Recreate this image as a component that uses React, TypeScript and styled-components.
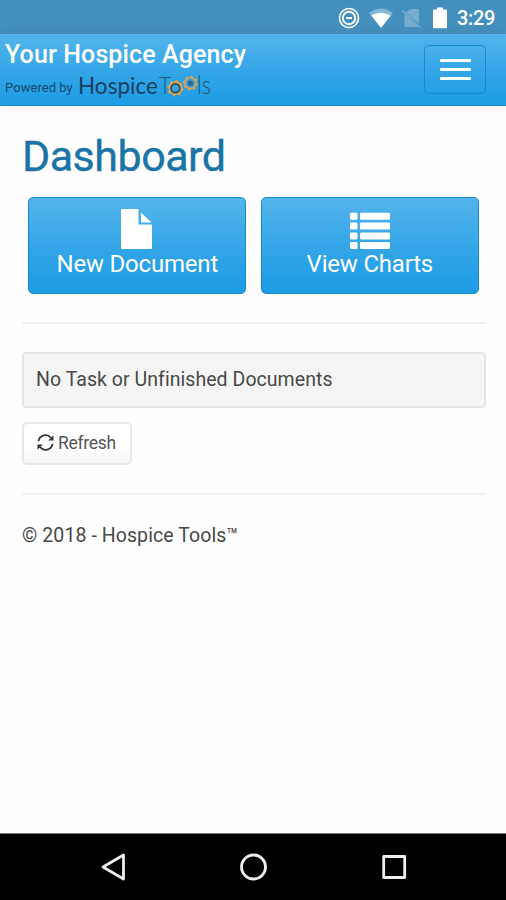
import React from "react";
import styled, { createGlobalStyle } from "styled-components";

const GlobalStyle = createGlobalStyle`
  *, *::before, *::after { box-sizing: border-box; }
  body { margin: 0; background: #fff; }
  button { font: inherit; margin: 0; }
`;

const Screen = styled.div`
  display: flex;
  flex-direction: column;
  width: 506px;
  height: 900px;
  overflow: hidden;
  background: #fefefe;
  color: #484848;
  font-family: Roboto, "Liberation Sans", sans-serif;
`;

const StatusBar = styled.div`
  display: flex;
  flex: none;
  align-items: center;
  justify-content: flex-end;
  height: 34px;
  padding: 1px 11px 0 0;
  background: #438fbd;
  color: #fff;
`;

const StatusIcons = styled.svg`
  display: block;
  margin-right: 9px;
`;

const Clock = styled.span`
  width: 38px;
  font-size: 20px;
  font-weight: 500;
  line-height: 24px;
  letter-spacing: -0.3px;
  white-space: nowrap;
`;

const Navbar = styled.header`
  display: flex;
  flex: none;
  justify-content: space-between;
  height: 72px;
  padding: 0 20px 0 5px;
  background: linear-gradient(#54b4eb, #2fa4e7 60%, #1d9ce5);
  border-bottom: 1px solid #178acc;
  box-shadow: 0 1px 10px rgba(0, 0, 0, 0.08);
`;

const Brand = styled.div`
  display: flex;
  flex-direction: column;
  padding-top: 7px;
`;

const AgencyName = styled.div`
  color: #fff;
  font-size: 25px;
  font-weight: 500;
  line-height: 28px;
  letter-spacing: 0.12px;
  white-space: nowrap;
`;

const Powered = styled.div`
  display: flex;
  gap: 5px;
  color: #16486b;
  font-size: 13px;
  line-height: 37px;
  letter-spacing: 0.05px;
  white-space: nowrap;
`;

const PoweredLabel = styled.span`
  width: 69px;
`;

const LogoDrawing = styled.svg`
  display: block;
  overflow: visible;
`;

const MenuButton = styled.button`
  display: flex;
  flex-direction: column;
  align-items: center;
  justify-content: center;
  gap: 6px;
  width: 62px;
  height: 49px;
  margin-top: 11px;
  padding: 0;
  background: transparent;
  border: 1px solid #178acc;
  border-radius: 5px;
`;

const MenuLine = styled.span`
  width: 31px;
  height: 3px;
  border-radius: 1px;
  background: #fff;
`;

const Content = styled.main`
  flex: 1;
  padding: 25px 20px 0 22px;
`;

const Title = styled.h1`
  margin: 0;
  color: #1a74a6;
  font-size: 43px;
  font-weight: 400;
  -webkit-text-stroke: 0.4px #1a74a6;
  line-height: 50px;
  letter-spacing: -0.5px;
  white-space: nowrap;
`;

const Actions = styled.div`
  display: grid;
  grid-template-columns: 218px 218px;
  gap: 14.5px;
  margin: 16px 0 0 6.3px;
`;

const ActionButton = styled.button`
  display: flex;
  flex-direction: column;
  align-items: center;
  height: 97px;
  padding: 11px 0 0;
  color: #fff;
  font-size: 24px;
  line-height: 30px;
  white-space: nowrap;
  background: linear-gradient(#54b4eb, #2fa4e7 60%, #1d9ce5);
  border: 1px solid #178acc;
  border-radius: 5px;
`;

const ActionLabel = styled.span`
  letter-spacing: -0.2px;
`;

const Divider = styled.hr`
  height: 2px;
  margin: 28px 0 0;
  border: 0;
  background: #f0f0f0;
`;

const TaskWell = styled.section`
  height: 56px;
  margin-top: 28px;
  padding: 12px 12px 0;
  font-size: 19.5px;
  line-height: 28px;
  letter-spacing: 0.05px;
  white-space: nowrap;
  background: #f5f5f5;
  border: 2px solid #e5e5e5;
  border-radius: 4px;
`;

const RefreshButton = styled.button`
  display: flex;
  align-items: center;
  gap: 4px;
  width: 110px;
  height: 43px;
  margin-top: 14px;
  padding: 0 0 2px 13px;
  color: #555;
  font-size: 17.5px;
  line-height: 24px;
  letter-spacing: -0.3px;
  white-space: nowrap;
  background: linear-gradient(#fff, #fff 60%, #f5f5f5);
  border: 2px solid #e8e8e8;
  border-radius: 5px;
`;

const Copyright = styled.footer`
  margin-top: 27px;
  font-size: 19.5px;
  line-height: 28px;
  letter-spacing: 0.08px;
  white-space: nowrap;
`;

const SystemNav = styled.nav`
  display: flex;
  flex: none;
  align-items: center;
  justify-content: center;
  height: 67px;
  border-top: 1px solid #777;
  background: #000;
`;

const gear = (cx: number, cy: number, outer: number, inner: number) =>
  Array.from({ length: 32 }, (_, i) => {
    const angle = ((i + 0.5) / 32) * Math.PI * 2;
    const radius = i % 4 < 2 ? outer : inner;
    return `${(cx + Math.cos(angle) * radius).toFixed(2)},${(cy + Math.sin(angle) * radius).toFixed(2)}`;
  }).join(" ");

const Logo = () => (
  <LogoDrawing width="134" height="36" viewBox="0 0 134 36" fontFamily="Lato, sans-serif">
    <text x="-1" y="24.5" fontSize="23" fill="#173e5c" textLength="80" lengthAdjust="spacingAndGlyphs">Hospice</text>
    <text x="80" y="24.5" fontSize="23" fontWeight="300" fill="#245577" textLength="12" lengthAdjust="spacingAndGlyphs">T</text>
    <polygon points={gear(96.4, 19.2, 8.2, 6.7)} fill="#e3a34b" />
    <circle cx="96.4" cy="19.2" r="5.2" fill="#284b60" />
    <circle cx="96.4" cy="19.2" r="3.5" fill="#38a2df" />
    <polygon points={gear(111.4, 14.2, 7.4, 6)} fill="#e3a34b" />
    <circle cx="111.4" cy="14.2" r="4.6" fill="#3aa0da" />
    <circle cx="111.4" cy="14.2" r="2.7" fill="#276b95" />
    <text x="118" y="24.5" fontSize="25" fontWeight="300" fill="#245577" textLength="14" lengthAdjust="spacingAndGlyphs">ls</text>
  </LogoDrawing>
);

const FileIcon = () => (
  <svg width="33" height="40" viewBox="0 0 33 40" fill="#fff">
    <path d="M1 0H17.5V15.5H31V39Q31 40 30 40H1Q0 40 0 39V1Q0 0 1 0Z" />
    <path d="M20 3.5L30.5 13.5H20Z" />
  </svg>
);

const ListIcon = () => (
  <svg width="40" height="40" viewBox="0 0 40 40" fill="#fff">
    {[3.8, 13.6, 23.4, 33].map((y) => (
      <g key={y}>
        <rect x="0" y={y} width="7.5" height="7" rx="1.3" />
        <rect x="10" y={y} width="30" height="7" rx="1.3" />
      </g>
    ))}
  </svg>
);

const RefreshIcon = () => (
  <svg width="17" height="17" viewBox="0 0 17 17">
    <g fill="none" stroke="#333" strokeWidth="1.8">
      <path d="M1.5 7.2A7 7 0 0 1 14 4" />
      <path d="M15.5 9.8A7 7 0 0 1 3 13" />
    </g>
    <path d="M16.5 1.2V6.5H11.2ZM.5 15.8V10.5H5.8Z" fill="#333" />
  </svg>
);

const App = () => (
  <>
    <GlobalStyle />
    <Screen>
      <StatusBar>
        <StatusIcons width="110" height="24" viewBox="338 5 110 24">
          <g fill="none" stroke="#fff">
            <circle cx="349" cy="17" r="9.5" strokeWidth="1.6" />
            <circle cx="349" cy="17" r="6.2" strokeWidth="2" />
            <path d="M346 17H352" strokeWidth="2" />
          </g>
          <path d="M369 12Q381 3 393 12L381 27Z" fill="#83b7d6" />
          <path d="M371.3 14.5Q381 9 390.7 14.5L381 26.7Z" fill="#fff" />
          <path d="M411 8H418Q419 8 419 9V23L406 11.5ZM404.5 13L418 26H405.5Q404.5 26 404.5 25Z" fill="#77adce" />
          <path d="M402.5 9.5L420 26.5" stroke="#77adce" strokeWidth="1.7" />
          <path d="M437 6.5H443V8.5H446Q447 8.5 447 9.5V26Q447 27.2 446 27.2H434Q433 27.2 433 26V9.5Q433 8.5 434 8.5H437Z" fill="#fff" />
        </StatusIcons>
        <Clock>3:29</Clock>
      </StatusBar>
      <Navbar>
        <Brand>
          <AgencyName>Your Hospice Agency</AgencyName>
          <Powered>
            <PoweredLabel>Powered by</PoweredLabel>
            <Logo />
          </Powered>
        </Brand>
        <MenuButton aria-label="Menu">
          <MenuLine />
          <MenuLine />
          <MenuLine />
        </MenuButton>
      </Navbar>
      <Content>
        <Title>Dashboard</Title>
        <Actions>
          <ActionButton>
            <FileIcon />
            <ActionLabel>New Document</ActionLabel>
          </ActionButton>
          <ActionButton>
            <ListIcon />
            <ActionLabel>View Charts</ActionLabel>
          </ActionButton>
        </Actions>
        <Divider />
        <TaskWell>No Task or Unfinished Documents</TaskWell>
        <RefreshButton>
          <RefreshIcon />
          Refresh
        </RefreshButton>
        <Divider />
        <Copyright>© 2018 - Hospice Tools™</Copyright>
      </Content>
      <SystemNav>
        <svg width="310" height="34" viewBox="98 850 310 34" fill="none" stroke="#eee" strokeWidth="2.8" strokeLinejoin="round">
          <path d="M103 867L123.5 855V879Z" />
          <circle cx="253.5" cy="867" r="12" />
          <rect x="383.7" y="856.5" width="21" height="21" />
        </svg>
      </SystemNav>
    </Screen>
  </>
);

export default App;
